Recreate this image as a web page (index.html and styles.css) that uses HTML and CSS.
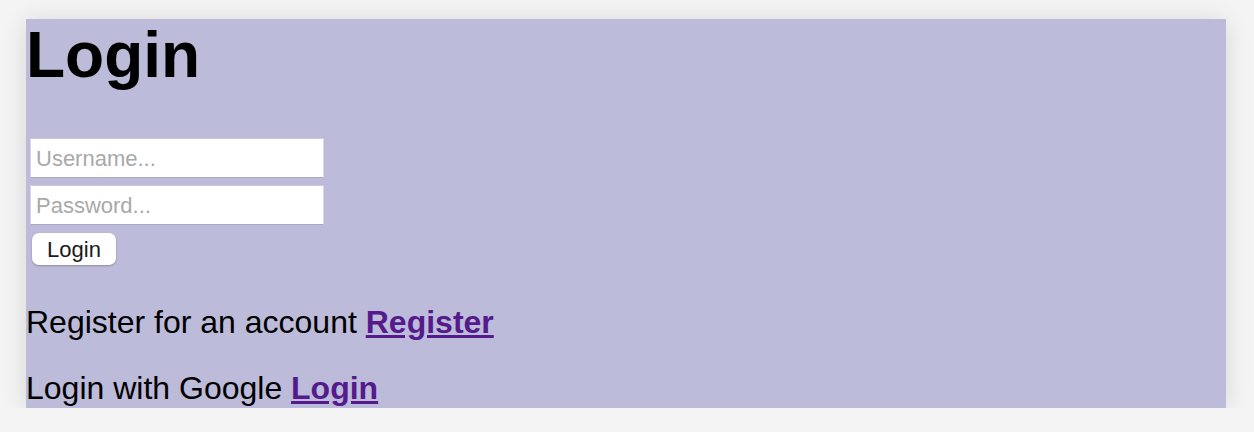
FILE: index.html
```html
<!DOCTYPE html>
<html lang="en">
<head>
<meta charset="utf-8">
<title>Login</title>
<link rel="stylesheet" href="styles.css">
</head>
<body>
<main class="panel">
  <h1 class="title">Login</h1>
  <form class="login-form">
    <input class="field" type="text" placeholder="Username...">
    <input class="field" type="password" placeholder="Password...">
    <button class="btn" type="button">Login</button>
  </form>
  <p class="line">Register for an account <a class="link" href="#">Register</a></p>
  <p class="line">Login with Google <a class="link" href="#">Login</a></p>
</main>
</body>
</html>
```
FILE: styles.css
```css
html, body {
  margin: 0;
  padding: 0;
  background: #f4f4f4;
}
body {
  padding-top: 19px;
  padding-left: 26px;
  font-family: "Liberation Sans", Arial, Helvetica, sans-serif;
  color: #000;
}
.panel {
  width: 1200px;
  padding-bottom: 3px;
  background: #bcbbd9;
  box-shadow: 0 2px 24px rgba(0, 0, 0, 0.12);
  display: flow-root;
}
.title {
  margin: 0;
  font-size: 64px;
  font-weight: bold;
  line-height: 1.15;
}
.login-form {
  display: flex;
  flex-direction: column;
  align-items: flex-start;
  gap: 7px;
  margin: 45px 0 40px 4px;
}
.field {
  box-sizing: border-box;
  width: 294px;
  height: 40px;
  margin: 0;
  padding: 2px 5px 0;
  border: 1px solid #a9a8c6;
  border-left-color: #d8d8e6;
  border-right-color: #d8d8e6;
  border-top-color: #c8c7de;
  background: #fff;
  font-family: "Liberation Sans", Arial, sans-serif;
  font-size: 22px;
  color: #000;
  outline: none;
}
.field::placeholder {
  color: #a9a9a9;
}
.btn {
  box-sizing: border-box;
  width: 84px;
  height: 32px;
  margin: 1px 0 0 2px;
  padding: 3px 0 0;
  border: none;
  border-radius: 7px;
  background: #fff;
  box-shadow: 0 1px 2px rgba(0, 0, 0, 0.25);
  font-family: "Liberation Sans", Arial, sans-serif;
  font-size: 22px;
  color: #1a1a1a;
}
.line {
  margin: 0 0 32px;
  font-size: 32px;
  line-height: 34px;
}
.line:last-child {
  margin-bottom: 0;
}
.link {
  color: #551a8b;
  font-weight: bold;
  text-decoration: underline;
}
```
